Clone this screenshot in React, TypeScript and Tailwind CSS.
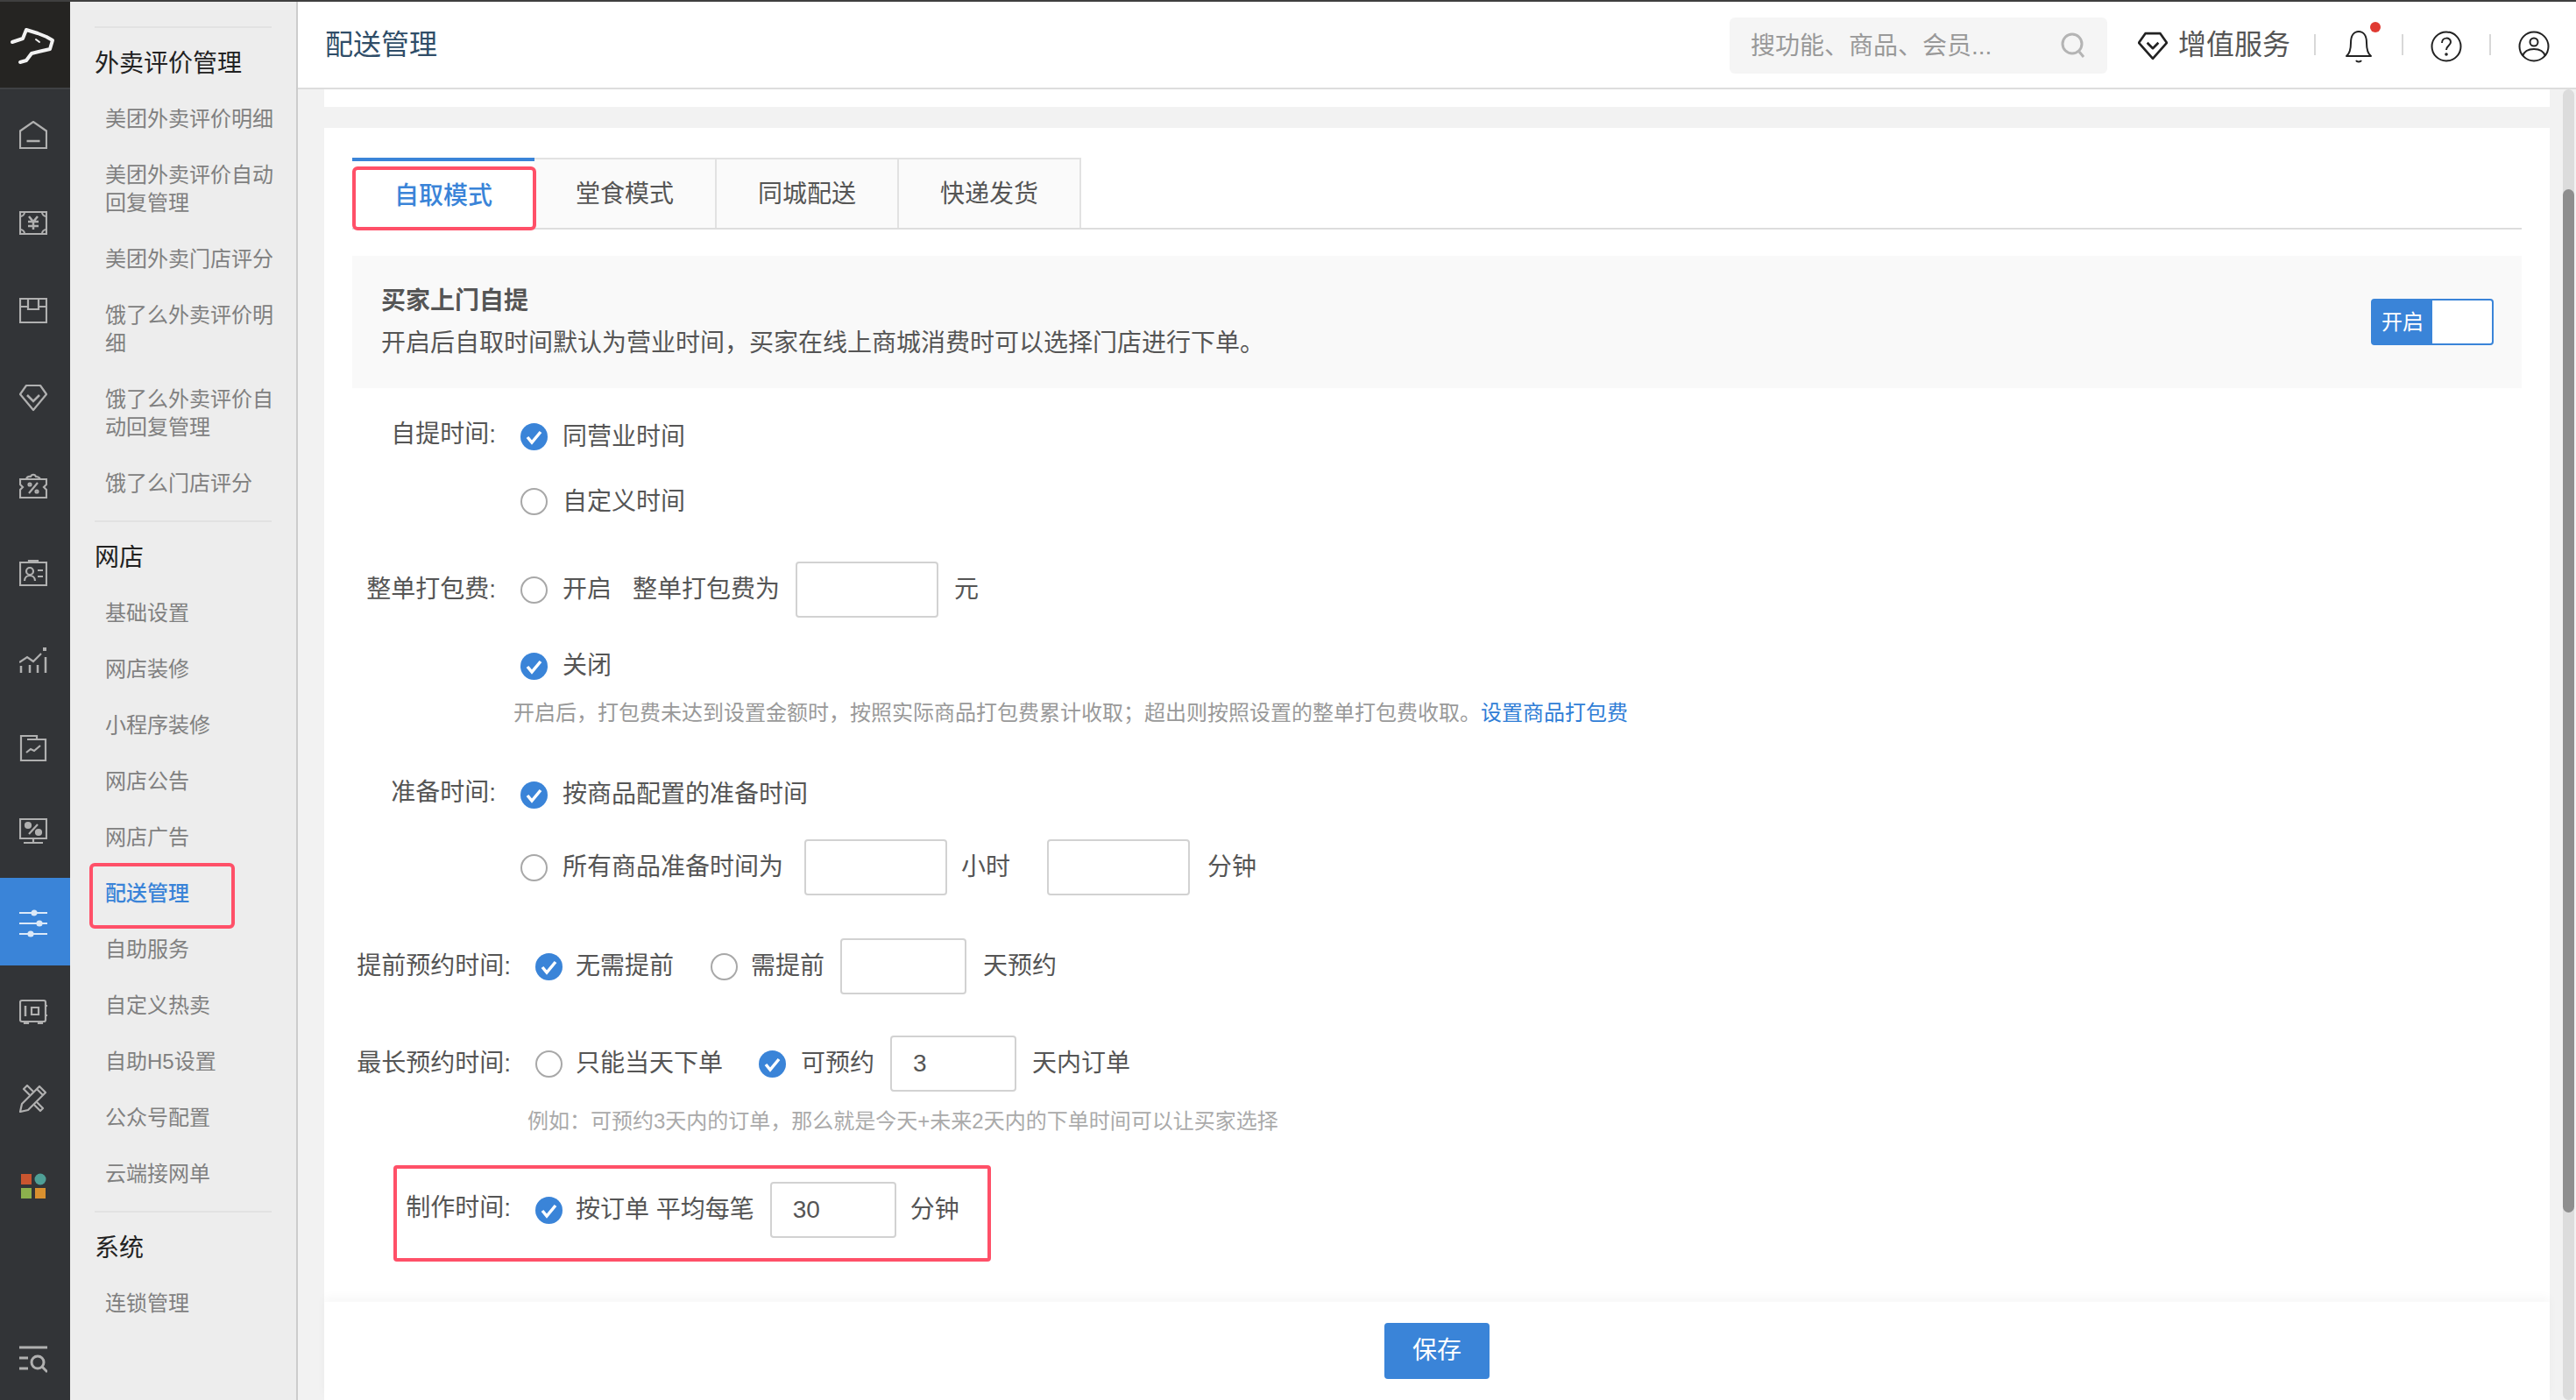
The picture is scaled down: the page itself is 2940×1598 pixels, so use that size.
import React from "react";

const S = { fill: "none", stroke: "currentColor", strokeWidth: 2.2 } as const;

function Ico({ children }: { children: React.ReactNode }) {
  return (
    <svg width="32" height="32" viewBox="0 0 32 32" {...S}>
      {children}
    </svg>
  );
}

const railIcons: React.ReactNode[] = [
  <Ico key="home"><path d="M1 31V11.500L16 1l15 10.500V31z" /><path d="M8.500 23h15" strokeWidth="2.500" /></Ico>,
  <Ico key="money"><path d="M1 4h30v25H1z" /><path d="M1 9a5 5 0 0 0 5-5M26 4a5 5 0 0 0 5 5M31 24a5 5 0 0 0-5 5M6 29a5 5 0 0 0-5-5" /><path d="M11 9l5 6 5-6M10 15h12M10 20h12M16 15v9" strokeWidth="2.500" /></Ico>,
  <Ico key="box"><path d="M1 3h30v27H1zM1 12h9V3M31 12h-9V3M10 12v3h12v-3" /></Ico>,
  <Ico key="diamond"><path d="M8 2h16l7 10-15 18L1 12z" strokeLinejoin="round" /><path d="M9 13l7 7 7-7" strokeWidth="2.500" /></Ico>,
  <Ico key="coupon"><path d="M1 9h30v6l-3 3 3 3v9H1v-9l3-3-3-3z" /><path d="M8 9c1-4 4-3 5-3 1-3 5-3 6 0 2 0 4 1 5 3" /><path d="M21 13L11 25" /><circle cx="12" cy="15" r="1.500" /><circle cx="20" cy="23" r="1.500" /></Ico>,
  <Ico key="card"><path d="M1 4h30v26H1z" /><path d="M11 4V2h10v2" /><circle cx="12" cy="14" r="4" /><path d="M6 25c0-8 12-8 12 0M21 13h6M21 20h6" /></Ico>,
  <Ico key="chart"><path d="M2 30v-8M12 30v-9M21 30v-9M30 30V12" strokeWidth="2.500" /><path d="M0 18l9-6 7 5 9-9" /><rect x="27" y="1" width="4" height="4" fill="currentColor" stroke="none" /></Ico>,
  <Ico key="report"><path d="M2 30V2h18v4h10v24zM9 6h11" /><path d="M8 21l5-4 4 2 7-6" /></Ico>,
  <Ico key="screen"><path d="M1 2h30v22H1zM16 24v5M5 29h22" /><path d="M21 8L11 19" /><circle cx="10" cy="9" r="3" fill="currentColor" /><circle cx="22" cy="17" r="3" fill="currentColor" /></Ico>,
  <Ico key="sliders"><path d="M0 4h32M0 16h32M0 28h32" /><circle cx="17" cy="4" r="2.500" fill="currentColor" /><circle cx="23" cy="16" r="2.500" fill="currentColor" /><circle cx="13" cy="28" r="2.500" fill="currentColor" /></Ico>,
  <Ico key="safe"><path d="M3 4h25a2 2 0 0 1 2 2v20a2 2 0 0 1-2 2H3a2 2 0 0 1-2-2V6a2 2 0 0 1 2-2z" /><path d="M7 10v12" strokeWidth="2.500" /><path d="M14 12h8v8h-8zM30 10h2M30 21h2M6 28v2h4v-2M22 28v2h4v-2" /></Ico>,
  <Ico key="tools"><path d="M1 31l2-9L20 5l7 7-17 17zM20 5l3-3 7 7-3 3" strokeLinejoin="round" /><path d="M12 12L5 5l4-4 7 7M20 20l7 7-3 3-7-7" strokeLinejoin="round" /></Ico>,
  <svg key="apps" width="32" height="32" viewBox="0 0 32 32">
    <rect x="2" y="2" width="12" height="12" fill="#c9552f" />
    <circle cx="24" cy="8" r="6.500" fill="#4f9f96" />
    <rect x="2" y="18" width="12" height="12" fill="#8cb04d" />
    <rect x="18" y="18" width="12" height="12" fill="#d9902f" />
  </svg>,
];

function railClass(i: number) {
  if (i === 9) return "h-[100px] shrink-0 flex items-center justify-center pr-1 pt-[3px] bg-[#3a84d8] text-[#dce9f8]";
  if (i === 8) return "h-[100px] shrink-0 flex items-center justify-center pr-1 pb-[7px]";
  return "h-[100px] shrink-0 flex items-center justify-center pr-1 pt-[3px]";
}

function Rail() {
  return (
    <div className="w-20 shrink-0 h-full bg-[#323437] flex flex-col text-[#b0b0b0]">
      <div className="h-[98px] bg-[#252422] border-b-2 border-[#3f4144] box-content flex items-center justify-center pr-0.5">
        <svg width="56" height="48" viewBox="0 0 56 48" fill="none" stroke="#f2f2f2" strokeWidth="4" strokeLinecap="round" strokeLinejoin="round">
          <path d="M3 21l12-4 4-10 13 4 10 4 7 4-3 10-13 3-8 2-6 8-7 2" />
          <path d="M30 18l4 3" strokeWidth="2" />
        </svg>
      </div>
      {railIcons.map((icon, i) => (
        <div key={i} className={railClass(i)}>
          {icon}
        </div>
      ))}
      <div className="mt-auto h-[92px] flex items-center justify-center pr-1">
        <Ico>
          <path d="M0 2h32" strokeWidth="3" />
          <path d="M0 14h10M0 26h10" strokeWidth="3" />
          <circle cx="21" cy="19" r="7" strokeWidth="3" />
          <path d="M26 24l6 6" strokeWidth="3" />
        </Ico>
      </div>
    </div>
  );
}

function NavItem({ text, active }: { text: string; active?: boolean }) {
  return (
    <div className="relative pl-10 pr-[26px] py-4 text-2xl leading-8">
      <span className={active ? "text-[#3a84d8] font-medium" : "text-[#808080]"}>{text}</span>
      {active && <div className="absolute left-[22px] top-[-3px] w-[166px] h-[75px] border-4 border-[#ff5068] rounded-md" />}
    </div>
  );
}

function NavGroup({ title, items, first }: { title: string; items: string[]; first?: boolean }) {
  return (
    <div>
      <div className={first ? "mt-3 mx-7 h-0.5 bg-[#e2e2e2]" : "mt-2.5 mx-7 h-0.5 bg-[#e2e2e2]"} />
      <div className="mt-2.5 h-[62px] pl-7 flex items-center text-[28px] text-[#222222]">{title}</div>
      {items.map((t) => (
        <NavItem key={t} text={t} active={t === "配送管理"} />
      ))}
    </div>
  );
}

function Sidebar() {
  return (
    <div className="w-[260px] shrink-0 h-full bg-[#ededed] border-r-2 border-[#cccccc] pt-4 overflow-hidden">
      <NavGroup
        first
        title="外卖评价管理"
        items={["美团外卖评价明细", "美团外卖评价自动回复管理", "美团外卖门店评分", "饿了么外卖评价明细", "饿了么外卖评价自动回复管理", "饿了么门店评分"]}
      />
      <NavGroup
        title="网店"
        items={["基础设置", "网店装修", "小程序装修", "网店公告", "网店广告", "配送管理", "自助服务", "自定义热卖", "自助H5设置", "公众号配置", "云端接网单"]}
      />
      <NavGroup title="系统" items={["连锁管理"]} />
    </div>
  );
}

function Header() {
  return (
    <div className="h-[100px] shrink-0 bg-white border-b-2 border-[#dddddd] flex items-center pl-[31px]">
      <div className="text-[32px] text-[#2f4d68]">配送管理</div>
      <div className="ml-auto mt-0.5 w-[431px] h-16 bg-[#f5f5f5] rounded-md flex items-center justify-between pl-6 pr-6">
        <span className="pt-0.5 text-[28px] text-[#999999]">搜功能、商品、会员...</span>
        <svg width="30" height="32" viewBox="0 0 30 32" fill="none" stroke="#b4b4b4" strokeWidth="3">
          <circle cx="14" cy="14" r="11" />
          <path d="M22 23l5 6" />
        </svg>
      </div>
      <svg className="ml-[35px] mt-0.5" width="34" height="34" viewBox="0 0 32 32" fill="none" stroke="#222222" strokeWidth="2.500" strokeLinejoin="round">
        <path d="M8 3h16l7 10-15 17L1 13z" />
        <path d="M10 13l6 6 6-6" />
      </svg>
      <span className="ml-3 text-[32px] text-[#555555]">增值服务</span>
      <div className="ml-[27px] w-0.5 h-6 bg-[#d8d8d8]" />
      <div className="w-[98px] mt-1 flex justify-center">
        <div className="relative">
          <svg width="30" height="38" viewBox="0 0 30 38" fill="none" stroke="#222222" strokeWidth="2">
            <path d="M1 30c4-3 5-8 5-15C6 6 10 2 15 2s9 4 9 13c0 7 1 12 5 15zM12 35c1 2 5 2 6 0" strokeLinejoin="round" />
          </svg>
          <div className="absolute right-[-10px] top-[-9px] w-3 h-3 rounded-full bg-[#e03a32]" />
        </div>
      </div>
      <div className="w-0.5 h-6 bg-[#d8d8d8]" />
      <div className="w-[98px] mt-1 flex justify-center">
        <svg width="36" height="36" viewBox="0 0 36 36" fill="none" stroke="#222222" strokeWidth="2">
          <circle cx="18" cy="18" r="16.500" />
          <path d="M13 14c0-7 10-7 10-1 0 4-5 4-5 9" />
          <circle cx="18" cy="27" r="0.800" fill="#222222" />
        </svg>
      </div>
      <div className="w-0.5 h-6 bg-[#d8d8d8]" />
      <div className="w-[97px] mt-1 flex justify-center">
        <svg width="36" height="36" viewBox="0 0 36 36" fill="none" stroke="#222222" strokeWidth="2">
          <circle cx="18" cy="18" r="16.500" />
          <circle cx="18" cy="13" r="4.500" />
          <path d="M5 29c2-6 7-8 13-8s11 2 13 8" />
        </svg>
      </div>
    </div>
  );
}

function Radio({ on, className }: { on?: boolean; className?: string }) {
  return (
    <svg className={`shrink-0 ${className ?? ""}`} width="31" height="31" viewBox="0 0 31 31">
      {on ? (
        <>
          <circle cx="15.500" cy="15.500" r="15.500" fill="#3a84d8" />
          <path d="M8 16l5 6 10-12" fill="none" stroke="#ffffff" strokeWidth="3.500" />
        </>
      ) : (
        <circle cx="15.500" cy="15.500" r="14.500" fill="#ffffff" stroke="#a8a8a8" strokeWidth="2" />
      )}
    </svg>
  );
}

function Field({ value, className }: { value?: string; className: string }) {
  return (
    <input
      readOnly
      value={value ?? ""}
      className={`h-16 border-2 border-[#d2d2d2] rounded bg-white text-[28px] text-[#555555] pl-6 outline-none shrink-0 ${className}`}
    />
  );
}

function Tabs() {
  const rest = ["堂食模式", "同城配送", "快递发货"];
  return (
    <div className="relative flex h-[82px] border-b-2 border-[#dddddd]">
      <div className="w-[208px] border-t-4 border-[#3a84d8] bg-white flex items-center justify-center pt-1 text-[28px] font-medium text-[#3a84d8]">自取模式</div>
      {rest.map((t) => (
        <div key={t} className="w-[208px] border-t-2 border-r-2 border-[#e2e2e2] bg-[#fafafa] flex items-center justify-center pt-0.5 text-[28px] text-[#555555]">
          {t}
        </div>
      ))}
      <div className="absolute left-0 top-2.5 w-[210px] h-[73px] border-4 border-[#ff5068] rounded-md" />
    </div>
  );
}

function Form() {
  return (
    <div className="text-[28px] text-[#555555]">
      <div className="mt-[23px] h-16 flex items-center">
        <div className="w-[164px] text-right -mt-1">自提时间:</div>
        <Radio on className="ml-[28px]" />
        <span className="ml-[17px] pt-0.5">同营业时间</span>
      </div>
      <div className="mt-2.5 h-16 flex items-center pl-[192px]">
        <Radio />
        <span className="ml-[17px] pt-0.5">自定义时间</span>
      </div>
      <div className="mt-[37px] h-16 flex items-center">
        <div className="w-[164px] text-right">整单打包费:</div>
        <Radio className="ml-[28px]" />
        <span className="ml-[17px]">开启</span>
        <span className="ml-6">整单打包费为</span>
        <Field className="ml-[18px] w-[163px]" />
        <span className="ml-[18px]">元</span>
      </div>
      <div className="mt-[23px] h-16 flex items-center pl-[192px]">
        <Radio on />
        <span className="ml-[17px]">关闭</span>
      </div>
      <div className="mt-1.5 h-8 pl-[184px] text-2xl leading-8 text-[#999999]">
        开启后，打包费未达到设置金额时，按照实际商品打包费累计收取；超出则按照设置的整单打包费收取。<span className="text-[#2f7dd6]">设置商品打包费</span>
      </div>
      <div className="mt-[45px] h-16 flex items-center">
        <div className="w-[164px] text-right -mt-1">准备时间:</div>
        <Radio on className="ml-[28px]" />
        <span className="ml-[17px]">按商品配置的准备时间</span>
      </div>
      <div className="mt-[19px] h-16 flex items-center pl-[192px]">
        <Radio />
        <span className="ml-[17px]">所有商品准备时间为</span>
        <Field className="ml-6 w-[163px]" />
        <span className="ml-4">小时</span>
        <Field className="ml-[42px] w-[163px]" />
        <span className="ml-5">分钟</span>
      </div>
      <div className="mt-[49px] h-16 flex items-center">
        <div className="w-[181px] text-right">提前预约时间:</div>
        <Radio on className="ml-7" />
        <span className="ml-[15px]">无需提前</span>
        <Radio className="ml-[42px]" />
        <span className="ml-[15px]">需提前</span>
        <Field className="ml-[18px] w-[144px]" />
        <span className="ml-[19px]">天预约</span>
      </div>
      <div className="mt-[47px] h-16 flex items-center">
        <div className="w-[181px] text-right">最长预约时间:</div>
        <Radio className="ml-7" />
        <span className="ml-[15px]">只能当天下单</span>
        <Radio on className="ml-[41px]" />
        <span className="ml-[17px]">可预约</span>
        <Field value="3" className="ml-[18px] w-[144px]" />
        <span className="ml-[18px]">天内订单</span>
      </div>
      <div className="mt-[18px] h-8 pl-[200px] text-2xl leading-8 text-[#aaaaaa]">例如：可预约3天内的订单，那么就是今天+未来2天内的下单时间可以让买家选择</div>
      <div className="relative mt-[53px] h-16 flex items-center">
        <div className="w-[181px] text-right -mt-1">制作时间:</div>
        <Radio on className="ml-7" />
        <span className="ml-[15px]">按订单 平均每笔</span>
        <Field value="30" className="ml-[18px] w-[144px]" />
        <span className="ml-4">分钟</span>
        <div className="absolute left-[47px] top-[-19px] w-[682px] h-[110px] border-4 border-[#ff5068] rounded" />
      </div>
    </div>
  );
}

export default function App() {
  return (
    <div className="w-[2940px] h-[1598px] overflow-hidden bg-[#f2f2f2] border-t-2 border-[#3f3f3f] flex [font-family:'Liberation_Sans','Noto_Sans_CJK_SC',sans-serif]">
      <Rail />
      <Sidebar />
      <div className="flex-1 min-w-0 h-full flex flex-col">
        <Header />
        <div className="flex-1 min-h-0 flex pl-[30px]">
          <div className="flex-1 min-w-0 flex flex-col">
            <div className="h-5 shrink-0 bg-white" />
            <div className="mt-6 flex-1 min-h-0 bg-white px-8 pt-[34px]">
              <Tabs />
              <div className="mt-[30px] h-[151px] bg-[#f9f9f9] pl-[33px] pr-8 flex items-center justify-between">
                <div>
                  <div className="text-[28px] leading-9 font-bold text-[#555555]">买家上门自提</div>
                  <div className="mt-3 text-[28px] leading-9 text-[#555555]">开启后自取时间默认为营业时间，买家在线上商城消费时可以选择门店进行下单。</div>
                </div>
                <div className="w-[140px] h-[53px] border-2 border-[#3a84d8] rounded flex bg-white">
                  <div className="w-[68px] bg-[#3a84d8] flex items-center justify-center text-2xl text-white">开启</div>
                </div>
              </div>
              <Form />
            </div>
            <div className="relative h-[112px] shrink-0 bg-white pt-6 flex justify-center shadow-[0_-6px_10px_rgba(0,0,0,0.03)]">
              <button className="w-[120px] h-16 bg-[#3a84d8] rounded-sm text-[28px] text-white">保存</button>
            </div>
          </div>
          <div className="w-[30px] shrink-0 pl-[15px] pr-0.5">
            <div className="h-full bg-[#dcdcdc] rounded-full pt-[114px]">
              <div className="h-[1168px] bg-[#8e8e8e] rounded-full" />
            </div>
          </div>
        </div>
      </div>
    </div>
  );
}
